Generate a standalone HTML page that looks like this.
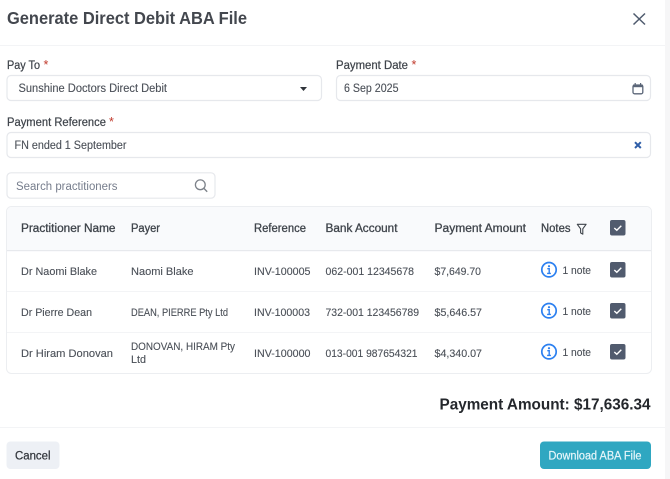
<!DOCTYPE html>
<html><head><meta charset="utf-8"><title>Generate Direct Debit ABA File</title>
<style>
html,body{margin:0;padding:0;width:670px;height:479px;overflow:hidden;background:#fff}
svg{display:block;filter:blur(.3px)}
text{font-family:"Liberation Sans",sans-serif;font-size:11.5px;fill:#4b5058;stroke:#4b5058;stroke-width:.12px}
.r text{font-size:11px}
.h{fill:#3f444b;font-size:11.5px;stroke:#3f444b;stroke-width:.3px}
.l{fill:#3f444b;font-size:11.5px;stroke:#3f444b;stroke-width:.22px}
.s{fill:#c0392b;stroke:none;font-size:12.5px}
.b{fill:none;stroke:#e6e8ec;stroke-width:1.2}
</style></head><body>
<svg width="670" height="479" viewBox="0 0 670 479" xmlns="http://www.w3.org/2000/svg">
<rect x="665" y="0" width="5" height="479" fill="#f6f6f7"/>
<rect x="0" y="45" width="665" height="1" fill="#f3f4f6"/>
<rect x="0" y="427" width="665" height="1" fill="#f3f4f6"/>

<text x="7" y="24" textLength="240" lengthAdjust="spacingAndGlyphs" style="font-size:17.5px;font-weight:700;fill:#43474e;stroke:none">Generate Direct Debit ABA File</text>
<path d="M633.5 13.5L645 24.5M645 13.5L633.5 24.5" fill="none" stroke="#4f5b6e" stroke-width="1.5"/>

<text class="l" x="7" y="69" textLength="33" lengthAdjust="spacingAndGlyphs">Pay To</text><text class="s" x="43.5" y="69">*</text>
<rect class="b" x="7" y="75.5" width="314.5" height="25" rx="4"/>
<text x="18.5" y="92" textLength="148.5" lengthAdjust="spacingAndGlyphs">Sunshine Doctors Direct Debit</text>
<path d="M300 87h7l-3.500 4z" fill="#2f343b"/>

<text class="l" x="336" y="69" textLength="72" lengthAdjust="spacingAndGlyphs">Payment Date</text><text class="s" x="411.5" y="69">*</text>
<rect class="b" x="336.5" y="75.5" width="314" height="25" rx="4"/>
<text x="344" y="92" textLength="54.5" lengthAdjust="spacingAndGlyphs">6 Sep 2025</text>
<rect x="633" y="85" width="9.8" height="8.8" rx="1.6" fill="none" stroke="#5b6678" stroke-width="1.3"/>
<rect x="633" y="84.6" width="9.8" height="2.6" fill="#5b6678"/>
<path d="M635.2 83v2M640.6 83v2" stroke="#5b6678" stroke-width="1.2"/>

<text class="l" x="7" y="126" textLength="99" lengthAdjust="spacingAndGlyphs">Payment Reference</text><text class="s" x="109" y="126">*</text>
<rect class="b" x="7" y="132.5" width="643.5" height="25" rx="4"/>
<text x="14.5" y="149" textLength="112" lengthAdjust="spacingAndGlyphs">FN ended 1 September</text>
<path d="M635 142.2l5.800 5.800M640.800 142.200l-5.800 5.800" stroke="#2f5ea8" stroke-width="2" fill="none"/>

<rect class="b" x="7" y="172.8" width="208" height="25.4" rx="4"/>
<text x="16" y="190" textLength="101.500" lengthAdjust="spacingAndGlyphs" style="fill:#767d8c;stroke:none">Search practitioners</text>
<circle cx="200.300" cy="184.800" r="4.900" fill="none" stroke="#7d828a" stroke-width="1.300"/>
<path d="M203.800 188.300l3.400 3.400" stroke="#7d828a" stroke-width="1.400"/>

<rect x="6.500" y="206.500" width="645" height="167" rx="5" fill="#fff" stroke="#eceef1"/>
<path d="M7 250.500V211.500a4.500 4.500 0 0 1 4.500-4.500H646.500a4.500 4.500 0 0 1 4.500 4.500V250.500z" fill="#f9fafc"/>
<rect x="7" y="250" width="644" height="1.200" fill="#e7e9ed"/>
<rect x="7" y="291" width="644" height="1" fill="#f3f4f6"/>
<rect x="7" y="332" width="644" height="1" fill="#f3f4f6"/>

<text class="h" x="21" y="232" textLength="94.500" lengthAdjust="spacingAndGlyphs">Practitioner Name</text>
<text class="h" x="131" y="232" textLength="29" lengthAdjust="spacingAndGlyphs">Payer</text>
<text class="h" x="254" y="232" textLength="52" lengthAdjust="spacingAndGlyphs">Reference</text>
<text class="h" x="325.500" y="232" textLength="72" lengthAdjust="spacingAndGlyphs">Bank Account</text>
<text class="h" x="434.500" y="232" textLength="91.500" lengthAdjust="spacingAndGlyphs">Payment Amount</text>
<text class="h" x="541" y="232" textLength="29.500" lengthAdjust="spacingAndGlyphs">Notes</text>
<path d="M577.300 224.300h8.800l-3.300 4.500v5.400l-2.200-1.300v-4.100z" fill="none" stroke="#3f444b" stroke-width="1.100" stroke-linejoin="round"/>

<g class="r">
<text x="21" y="275" textLength="76" lengthAdjust="spacingAndGlyphs">Dr Naomi Blake</text>
<text x="131" y="275" textLength="62.500" lengthAdjust="spacingAndGlyphs">Naomi Blake</text>
<text x="254" y="275" textLength="56.500" lengthAdjust="spacingAndGlyphs">INV-100005</text>
<text x="325.500" y="275" textLength="88.500" lengthAdjust="spacingAndGlyphs">062-001 12345678</text>
<text x="434.500" y="275" textLength="46.500" lengthAdjust="spacingAndGlyphs">$7,649.70</text>

<text x="21" y="316" textLength="71" lengthAdjust="spacingAndGlyphs">Dr Pierre Dean</text>
<text x="131" y="316" textLength="97" lengthAdjust="spacingAndGlyphs">DEAN, PIERRE Pty Ltd</text>
<text x="254" y="316" textLength="56" lengthAdjust="spacingAndGlyphs">INV-100003</text>
<text x="325.500" y="316" textLength="93.500" lengthAdjust="spacingAndGlyphs">732-001 123456789</text>
<text x="434.500" y="316" textLength="47.500" lengthAdjust="spacingAndGlyphs">$5,646.57</text>

<text x="21" y="357" textLength="92" lengthAdjust="spacingAndGlyphs">Dr Hiram Donovan</text>
<text x="131" y="350" textLength="104" lengthAdjust="spacingAndGlyphs">DONOVAN, HIRAM Pty</text>
<text x="131" y="363" textLength="15" lengthAdjust="spacingAndGlyphs">Ltd</text>
<text x="254" y="357" textLength="56.500" lengthAdjust="spacingAndGlyphs">INV-100000</text>
<text x="325.500" y="357" textLength="92" lengthAdjust="spacingAndGlyphs">013-001 987654321</text>
<text x="434.500" y="357" textLength="47.500" lengthAdjust="spacingAndGlyphs">$4,340.07</text>

<text x="562.500" y="274" textLength="28.500" lengthAdjust="spacingAndGlyphs">1 note</text>
<text x="562.500" y="315" textLength="28.500" lengthAdjust="spacingAndGlyphs">1 note</text>
<text x="562.500" y="356" textLength="28.500" lengthAdjust="spacingAndGlyphs">1 note</text>
</g>

<g><circle cx="549" cy="269.700" r="7.200" fill="none" stroke="#2c80f0" stroke-width="1.700"/><circle cx="549" cy="266.200" r="1.100" fill="#2c80f0"/><path d="M547.300 268.700h1.900v4.400M547.100 273.400h3.800" fill="none" stroke="#2c80f0" stroke-width="1.400"/></g>
<g><circle cx="549" cy="310.700" r="7.200" fill="none" stroke="#2c80f0" stroke-width="1.700"/><circle cx="549" cy="307.200" r="1.100" fill="#2c80f0"/><path d="M547.300 309.700h1.900v4.400M547.100 314.400h3.800" fill="none" stroke="#2c80f0" stroke-width="1.400"/></g>
<g><circle cx="549" cy="351.700" r="7.200" fill="none" stroke="#2c80f0" stroke-width="1.700"/><circle cx="549" cy="348.200" r="1.100" fill="#2c80f0"/><path d="M547.300 350.700h1.900v4.400M547.100 355.400h3.800" fill="none" stroke="#2c80f0" stroke-width="1.400"/></g>

<rect x="610" y="220" width="15.500" height="15.500" rx="2" fill="#515b6e"/>
<path d="M614.300 228l2.500 2.300 4.500-4.500" fill="none" stroke="#fff" stroke-width="1.400"/>
<rect x="610" y="262" width="15.500" height="15.500" rx="2" fill="#515b6e"/>
<path d="M614.300 270l2.500 2.300 4.500-4.500" fill="none" stroke="#fff" stroke-width="1.400"/>
<rect x="610" y="303" width="15.500" height="15.500" rx="2" fill="#515b6e"/>
<path d="M614.300 311l2.500 2.300 4.500-4.500" fill="none" stroke="#fff" stroke-width="1.400"/>
<rect x="610" y="344" width="15.500" height="15.500" rx="2" fill="#515b6e"/>
<path d="M614.300 352l2.500 2.300 4.500-4.500" fill="none" stroke="#fff" stroke-width="1.400"/>

<text x="439.500" y="409.500" textLength="211" lengthAdjust="spacingAndGlyphs" style="font-size:15.500px;font-weight:700;fill:#24272c;stroke:none">Payment Amount: $17,636.34</text>

<rect x="6.500" y="441.500" width="53" height="27.500" rx="4" fill="#edf0f5"/>
<text x="15" y="459.500" textLength="35.500" lengthAdjust="spacingAndGlyphs" style="fill:#33373d;stroke:#33373d;stroke-width:.25px">Cancel</text>
<rect x="540" y="441.500" width="111" height="27.500" rx="4" fill="#2fa7c1"/>
<text x="548.500" y="459.500" textLength="93" lengthAdjust="spacingAndGlyphs" style="fill:#e6f6fa;stroke:#e6f6fa;stroke-width:.2px">Download ABA File</text>
</svg>
</body></html>
